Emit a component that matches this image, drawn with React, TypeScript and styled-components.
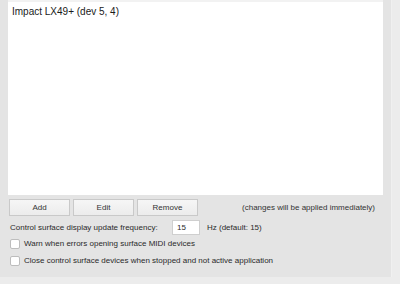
import React from "react";
import styled, { createGlobalStyle } from "styled-components";

const Global = createGlobalStyle`
  html, body { margin: 0; padding: 0; background: #ececec; }
  body { width: 400px; height: 284px; overflow: hidden; font-family: "Liberation Sans", Arial, sans-serif; }
`;

const Page = styled.div`
  width: 400px;
  height: 284px;
  display: flex;
  align-items: flex-start;
`;

const Panel = styled.div`
  width: 392px;
  height: 277px;
  background: #e4e4e4;
  border-right: 1px solid #f0f0f0;
  padding: 0 8px 0 8px;
  box-sizing: border-box;
  display: flex;
  flex-direction: column;
`;

const List = styled.div`
  height: 195px;
  background: #ffffff;
  border-top: 2px solid #f2f2f2;
  box-sizing: border-box;
  padding: 4px 4px;
`;

const ListItem = styled.div`
  font-size: 10px;
  color: #1a1a1a;
  line-height: 12px;
`;

const ButtonRow = styled.div`
  display: flex;
  align-items: center;
  margin-top: 4px;
  padding-left: 1px;
  gap: 3px;
`;

const Button = styled.button`
  width: 61px;
  height: 17px;
  padding: 0;
  background: linear-gradient(#f6f6f6, #ececec);
  border: 1px solid #c9c9c9;
  font-family: "Liberation Sans", Arial, sans-serif;
  font-size: 8px;
  color: #333;
`;

const Note = styled.span`
  margin-left: auto;
  margin-right: 8px;
  font-size: 8px;
  color: #333;
`;

const FreqRow = styled.div`
  display: flex;
  align-items: center;
  margin-top: 4px;
  padding-left: 2px;
  font-size: 8px;
  color: #2a2a2a;
`;

const FreqLabel = styled.span`
  width: 162px;
`;

const Input = styled.div`
  width: 28px;
  height: 15px;
  background: #fff;
  border: 1px solid #cfcfcf;
  box-sizing: border-box;
  padding-left: 4px;
  line-height: 13px;
  font-size: 8px;
`;

const Unit = styled.span`
  margin-left: 7px;
`;

const CheckRow = styled.label`
  display: flex;
  align-items: center;
  gap: 4px;
  padding-left: 2px;
  height: 17px;
  font-size: 8px;
  color: #2a2a2a;
`;

const Box = styled.span`
  width: 10px;
  height: 10px;
  background: #fff;
  border: 1px solid #bdbdbd;
  border-radius: 2px;
  box-sizing: border-box;
`;

const Checks = styled.div`
  margin-top: 0;
  display: flex;
  flex-direction: column;
`;

export default function App() {
  return (
    <>
      <Global />
      <Page>
        <Panel>
          <List>
            <ListItem>Impact LX49+ (dev 5, 4)</ListItem>
          </List>
          <ButtonRow>
            <Button>Add</Button>
            <Button>Edit</Button>
            <Button>Remove</Button>
            <Note>(changes will be applied immediately)</Note>
          </ButtonRow>
          <FreqRow>
            <FreqLabel>Control surface display update frequency:</FreqLabel>
            <Input>15</Input>
            <Unit>Hz (default: 15)</Unit>
          </FreqRow>
          <Checks>
            <CheckRow><Box />Warn when errors opening surface MIDI devices</CheckRow>
            <CheckRow><Box />Close control surface devices when stopped and not active application</CheckRow>
          </Checks>
        </Panel>
      </Page>
    </>
  );
}
